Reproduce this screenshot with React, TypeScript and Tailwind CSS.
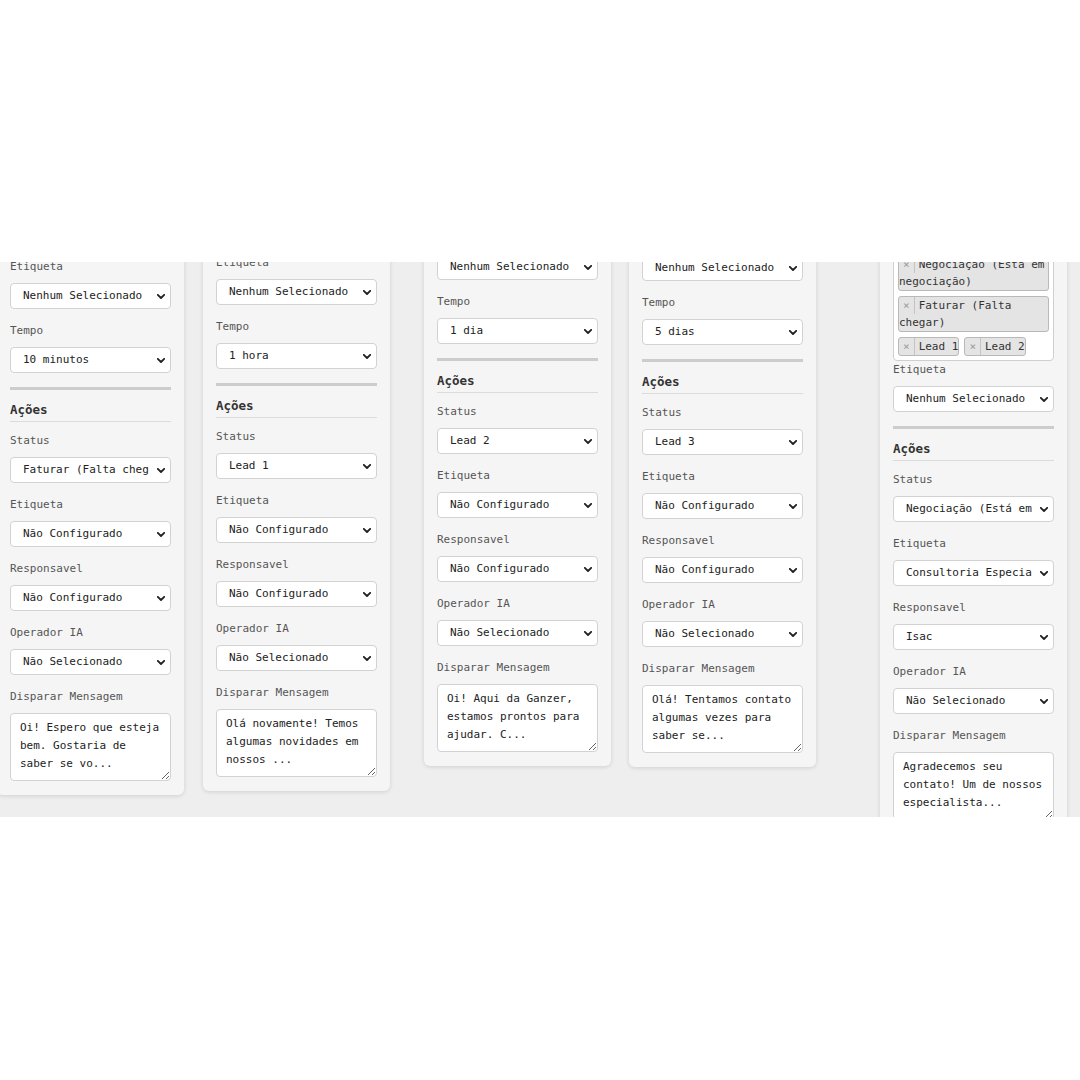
import React from 'react';

type Field = { label: string; value: string };

type CardData = {
  offset: string;
  top: Field[];
  actions: Field[];
  message: string;
  tags?: string[];
};

const CARDS: CardData[] = [
  {
    offset: 'ml-[-3px] mt-[-15px]',
    top: [
      { label: 'Etiqueta', value: 'Nenhum Selecionado' },
      { label: 'Tempo', value: '10 minutos' },
    ],
    actions: [
      { label: 'Status', value: 'Faturar (Falta chegar)' },
      { label: 'Etiqueta', value: 'Não Configurado' },
      { label: 'Responsavel', value: 'Não Configurado' },
      { label: 'Operador IA', value: 'Não Selecionado' },
    ],
    message: 'Oi! Espero que esteja bem. Gostaria de saber se vo...',
  },
  {
    offset: 'ml-[19px] mt-[-19px]',
    top: [
      { label: 'Etiqueta', value: 'Nenhum Selecionado' },
      { label: 'Tempo', value: '1 hora' },
    ],
    actions: [
      { label: 'Status', value: 'Lead 1' },
      { label: 'Etiqueta', value: 'Não Configurado' },
      { label: 'Responsavel', value: 'Não Configurado' },
      { label: 'Operador IA', value: 'Não Selecionado' },
    ],
    message: 'Olá novamente! Temos algumas novidades em nossos ...',
  },
  {
    offset: 'ml-[34px] mt-[-44px]',
    top: [
      { label: 'Etiqueta', value: 'Nenhum Selecionado' },
      { label: 'Tempo', value: '1 dia' },
    ],
    actions: [
      { label: 'Status', value: 'Lead 2' },
      { label: 'Etiqueta', value: 'Não Configurado' },
      { label: 'Responsavel', value: 'Não Configurado' },
      { label: 'Operador IA', value: 'Não Selecionado' },
    ],
    message: 'Oi! Aqui da Ganzer, estamos prontos para ajudar. C...',
  },
  {
    offset: 'ml-[18px] mt-[-43px]',
    top: [
      { label: 'Etiqueta', value: 'Nenhum Selecionado' },
      { label: 'Tempo', value: '5 dias' },
    ],
    actions: [
      { label: 'Status', value: 'Lead 3' },
      { label: 'Etiqueta', value: 'Não Configurado' },
      { label: 'Responsavel', value: 'Não Configurado' },
      { label: 'Operador IA', value: 'Não Selecionado' },
    ],
    message: 'Olá! Tentamos contato algumas vezes para saber se...',
  },
  {
    offset: 'ml-[64px] mt-[-24px]',
    tags: ['Negociação (Está em negociação)', 'Faturar (Falta chegar)', 'Lead 1', 'Lead 2'],
    top: [{ label: 'Etiqueta', value: 'Nenhum Selecionado' }],
    actions: [
      { label: 'Status', value: 'Negociação (Está em negociação)' },
      { label: 'Etiqueta', value: 'Consultoria Especializada' },
      { label: 'Responsavel', value: 'Isac' },
      { label: 'Operador IA', value: 'Não Selecionado' },
    ],
    message: 'Agradecemos seu contato! Um de nossos especialista...',
  },
];

const Select: React.FC<{ value: string }> = ({ value }) => (
  <div className="relative">
    <select
      defaultValue={value}
      className="block h-[26px] w-full appearance-none rounded-[4px] border border-[#d2d2d2] bg-white pl-[12px] pr-[21px] text-[11px] text-[#222] outline-none"
    >
      <option value={value}>{value}</option>
    </select>
    <svg
      className="pointer-events-none absolute right-[6px] top-[11px]"
      width="8"
      height="5"
      viewBox="0 0 8 5"
      fill="none"
    >
      <path d="M0.8 0.8L4 4L7.2 0.8" stroke="#222" strokeWidth="1.8" strokeLinecap="round" strokeLinejoin="round" />
    </svg>
  </div>
);

const FieldRow: React.FC<{ field: Field }> = ({ field }) => (
  <div className="mb-[14px]">
    <label className="mb-[8px] block text-[11px] leading-[16px] text-[#555]">{field.label}</label>
    <Select value={field.value} />
  </div>
);

const Tags: React.FC<{ tags: string[] }> = ({ tags }) => (
  <div className="mb-[1px] flex flex-wrap gap-[5px] rounded-[4px] border border-[#cfcfcf] bg-white p-[4px]">
    {tags.map(tag => (
      <div
        key={tag}
        className="rounded-[3px] border border-[#b9b9b9] bg-[#e4e4e4] text-[11px] leading-[17px] text-[#333]"
      >
        <span className="mr-[4px] inline-block border-r border-[#c4c4c4] px-[4px] text-[#999]">×</span>
        {tag}
      </div>
    ))}
  </div>
);

const Card: React.FC<{ card: CardData }> = ({ card }) => (
  <div
    className={`w-[187px] shrink-0 rounded-[6px] bg-[#f5f5f5] px-[13px] pt-[12px] pb-[14px] shadow-[0_1px_4px_rgba(0,0,0,0.13)] ${card.offset}`}
  >
    {card.tags && <Tags tags={card.tags} />}
    {card.top.map((f, i) => (
      <FieldRow key={i} field={f} />
    ))}

    <div className="mt-[4px] h-[3px] bg-[#cccccc]" />
    <h4 className="mt-[12px] mb-[11px] border-b border-[#dcdcdc] pb-[3px] text-[12.5px] leading-[16px] font-bold text-[#333]">
      Ações
    </h4>

    {card.actions.map((f, i) => (
      <FieldRow key={i} field={f} />
    ))}

    <div>
      <label className="mb-[8px] block text-[11px] leading-[16px] text-[#555]">Disparar Mensagem</label>
      <textarea
        defaultValue={card.message}
        className="block h-[68px] w-full rounded-[4px] border border-[#d2d2d2] bg-white px-[9px] py-[5px] text-[11px] leading-[18px] text-[#222] outline-none"
      />
    </div>
  </div>
);

export default function App() {
  return (
    <div className="min-h-screen bg-white pt-[262px] font-['DejaVu_Sans_Mono',monospace]">
      <div className="flex h-[555px] items-start overflow-hidden bg-[#eeeeee]">
        {CARDS.map((card, i) => (
          <Card key={i} card={card} />
        ))}
      </div>
    </div>
  );
}
